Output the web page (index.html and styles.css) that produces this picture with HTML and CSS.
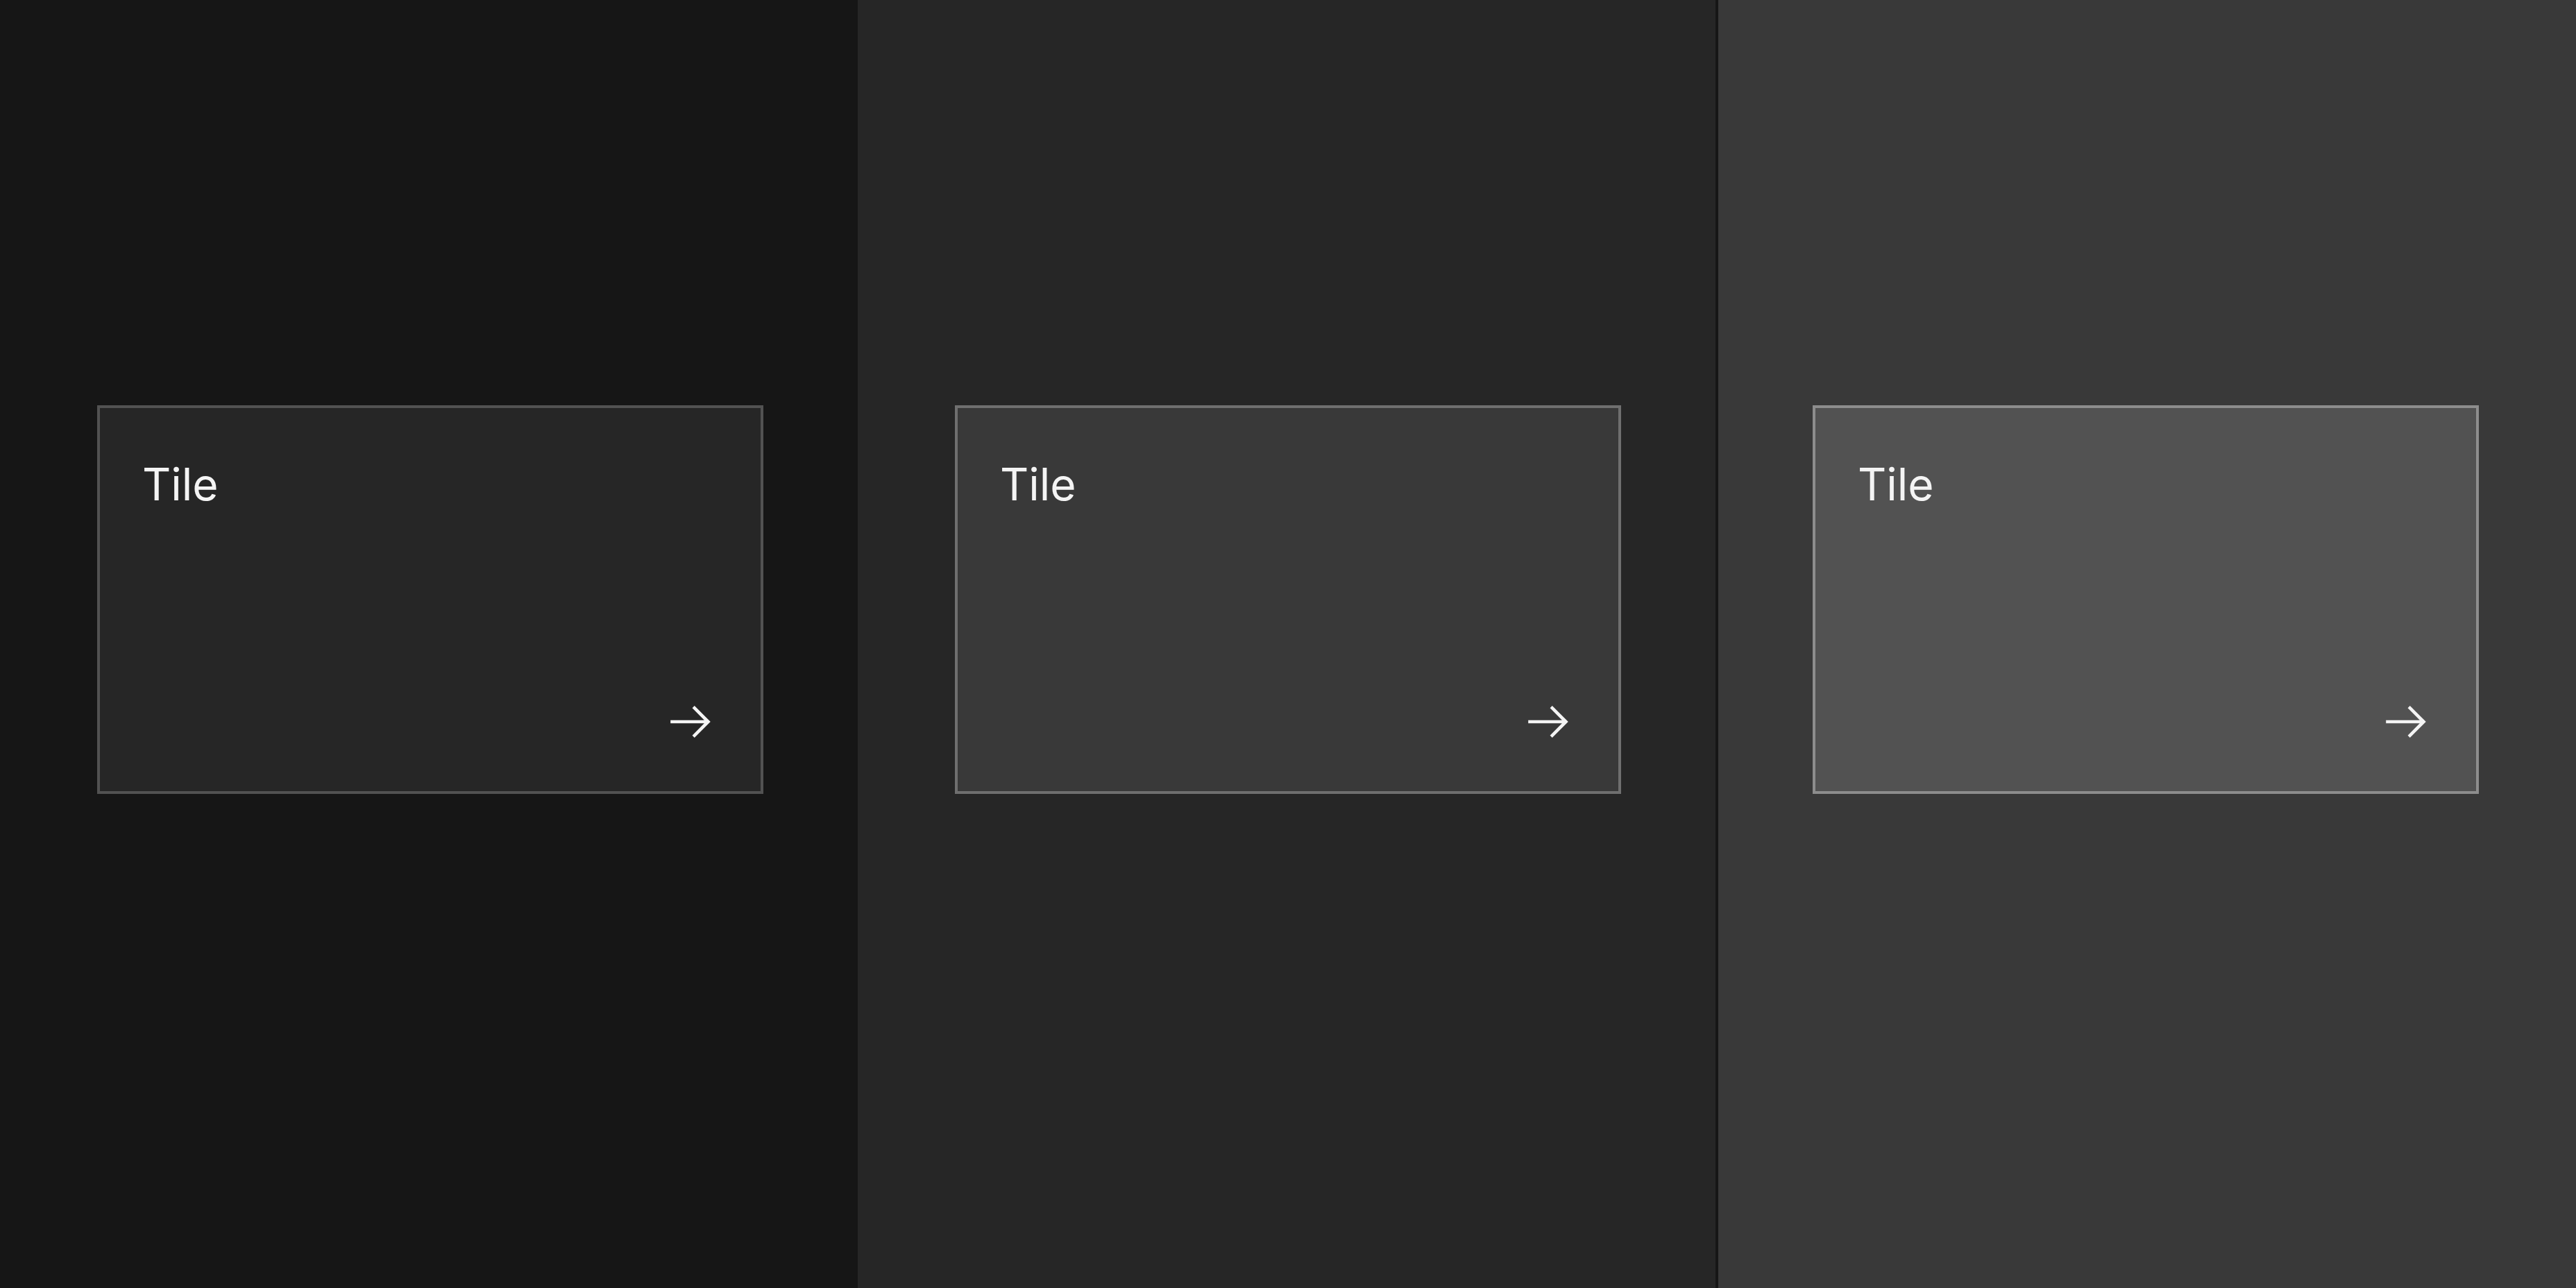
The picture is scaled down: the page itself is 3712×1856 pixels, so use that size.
FILE: index.html
```
<!DOCTYPE html>
<html lang="en">
<head>
<meta charset="utf-8">
<title>Tiles</title>
<link rel="stylesheet" href="styles.css">
</head>
<body>
<div class="themes">
  <section class="col col-g100">
    <div class="tile">
      <span class="tile-title">Tile</span>
      <svg class="tile-icon" viewBox="0 0 20 20" aria-hidden="true"><path d="M11.8 2.8L10.8 3.8 16.2 9.3 1 9.3 1 10.7 16.2 10.7 10.8 16.2 11.8 17.2 19 10z"/></svg>
    </div>
  </section>
  <section class="col col-g90">
    <div class="tile">
      <span class="tile-title">Tile</span>
      <svg class="tile-icon" viewBox="0 0 20 20" aria-hidden="true"><path d="M11.8 2.8L10.8 3.8 16.2 9.3 1 9.3 1 10.7 16.2 10.7 10.8 16.2 11.8 17.2 19 10z"/></svg>
    </div>
  </section>
  <section class="col col-g80">
    <div class="tile">
      <span class="tile-title">Tile</span>
      <svg class="tile-icon" viewBox="0 0 20 20" aria-hidden="true"><path d="M11.8 2.8L10.8 3.8 16.2 9.3 1 9.3 1 10.7 16.2 10.7 10.8 16.2 11.8 17.2 19 10z"/></svg>
    </div>
  </section>
</div>
</body>
</html>
```
FILE: styles.css
```
html, body {
  margin: 0;
  padding: 0;
  height: 100%;
}
body {
  font-family: Inter, "Noto Sans", sans-serif;
  color: #f4f4f4;
  background: #161616;
}
.themes {
  display: flex;
  height: 1856px;
}
.col {
  width: 1236px;
  flex: none;
  box-sizing: border-box;
  padding: 584px 0 0 140px;
}
.col-g100 { background: #161616; }
.col-g90 { background: #262626; }
.col-g80 {
  background: #393939;
  width: 1240px;
  border-left: 4px solid #161616;
  padding-left: 136px;
}
.tile {
  box-sizing: border-box;
  width: 960px;
  height: 560px;
  border: 4px solid #525252;
  background: #262626;
  padding: 62px 64px 64px 61px;
  display: flex;
  flex-direction: column;
}
.col-g90 .tile { background: #393939; border-color: #6f6f6f; }
.col-g80 .tile { background: #525252; border-color: #8d8d8d; }
.tile-title {
  font-size: 64px;
  line-height: 96px;
  font-weight: 400;
}
.tile-icon {
  width: 64px;
  height: 64px;
  fill: #f4f4f4;
  margin-top: auto;
  align-self: flex-end;
  margin-right: 5px;
  margin-bottom: 4px;
}
```
